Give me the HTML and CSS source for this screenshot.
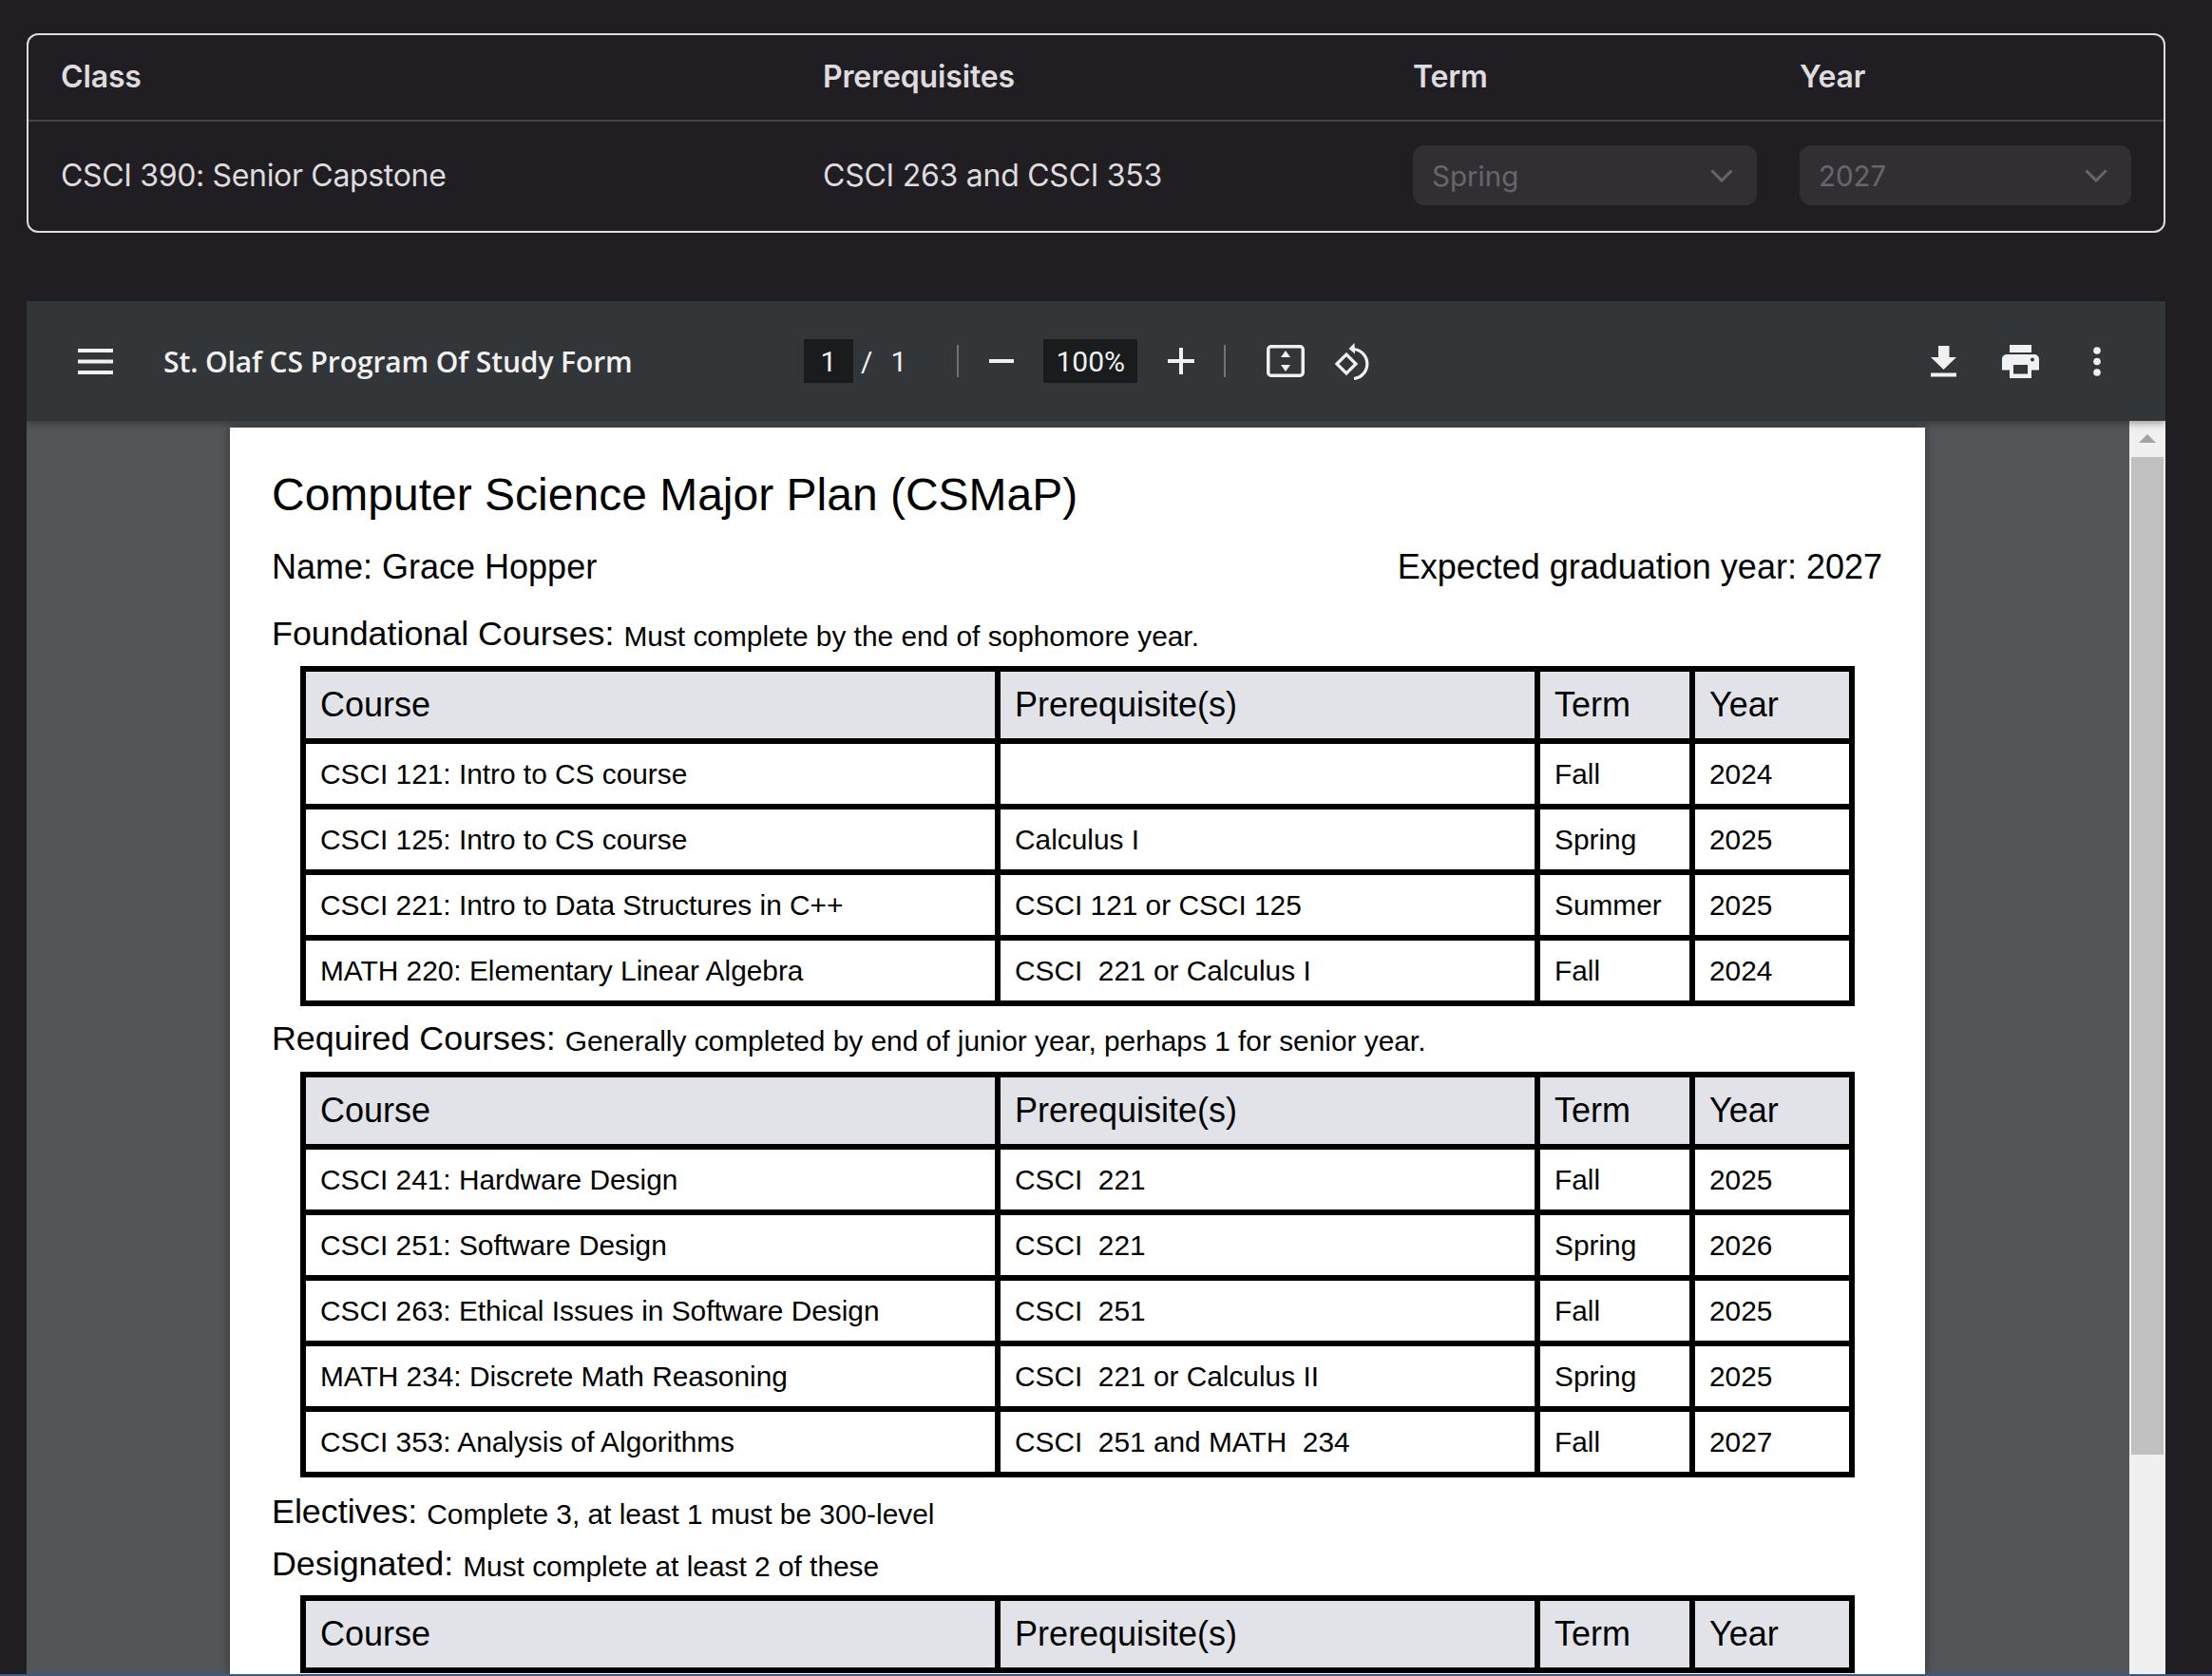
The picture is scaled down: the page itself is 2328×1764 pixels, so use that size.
FILE: index.html
```html
<!DOCTYPE html>
<html lang="en">
<head>
  <meta charset="UTF-8" />
  <title>CSMaP</title>
  <link rel="stylesheet" href="styles.css">
</head>
<body>
  <div class="class-card">
    <div class="class-row class-head">
      <span>Class</span>
      <span>Prerequisites</span>
      <span>Term</span>
      <span>Year</span>
    </div>
    <div class="class-row class-body">
      <span class="class-name">CSCI 390: Senior Capstone</span>
      <span>CSCI 263 and CSCI 353</span>
      <div class="select select-term">
        <span>Spring</span>
        <svg width="24" height="14" viewBox="0 0 24 14"><path d="M1.500 1.500 12 12 22.500 1.500" fill="none" stroke="currentColor" stroke-width="3"/></svg>
      </div>
      <div class="select select-year">
        <span>2027</span>
        <svg width="24" height="14" viewBox="0 0 24 14"><path d="M1.500 1.500 12 12 22.500 1.500" fill="none" stroke="currentColor" stroke-width="3"/></svg>
      </div>
    </div>
  </div>

  <div class="viewer">
    <div class="toolbar">
      <svg class="menu-icon" width="37" height="27" viewBox="0 0 37 27"><path d="M0 0h37v4H0zM0 11.500h37v4H0zM0 23h37v4H0z" fill="#f1f1f1"/></svg>
      <span class="doc-title">St. Olaf CS Program Of Study Form</span>
      <div class="tool-center">
        <span class="num-box page-box">1</span>
        <span class="slash">/</span>
        <span class="page-total">1</span>
        <span class="divider"></span>
        <svg class="zoom-out" width="26" height="26" viewBox="0 0 26 26"><path d="M0 11h26v4H0z" fill="#f1f1f1"/></svg>
        <span class="num-box zoom-box">100%</span>
        <svg class="zoom-in" width="28" height="28" viewBox="0 0 28 28"><path d="M12 0h4v12h12v4H16v12h-4V16H0v-4h12z" fill="#f1f1f1"/></svg>
        <span class="divider"></span>
        <svg class="fit-icon" width="40" height="34" viewBox="0 0 40 34">
          <rect x="1.750" y="1.750" width="36.500" height="30.500" rx="3" fill="none" stroke="#f1f1f1" stroke-width="3.500"/>
          <path d="M20 6l5 7H15zM20 28l-5-7h10z" fill="#f1f1f1"/>
        </svg>
        <svg class="rotate-icon" width="39" height="39" viewBox="0 0 39 39">
          <path d="M3 22 13 12 23 22 13 32z" fill="none" stroke="#f1f1f1" stroke-width="3.200"/>
          <path d="M21 6.500A15.600 15.600 0 0 1 21 37.500" fill="none" stroke="#f1f1f1" stroke-width="3.200"/>
          <path d="M21.500 0 15.500 6 22 11.500z" fill="#f1f1f1"/>
        </svg>
      </div>
      <div class="tool-right">
        <svg class="icon-download" width="27" height="33" viewBox="0 0 27 33"><path d="M8 0h11.500v12H27L13.500 25 0 12h8zM0 28.500h27v4H0z" fill="#f1f1f1"/></svg>
        <svg class="icon-print" width="39" height="35" viewBox="0 0 39 35"><path d="M8 0h23v8H8zM5 10h29c2.800 0 5 2.200 5 5v11.500h-8V35H8v-8.500H0V15c0-2.800 2.200-5 5-5zm7 11v9.500h15V21zm20-7.500a2 2 0 1 0 0 4 2 2 0 0 0 0-4z" fill="#f1f1f1" fill-rule="evenodd"/></svg>
        <svg class="icon-more" width="8" height="31" viewBox="0 0 8 31"><circle cx="4" cy="4" r="3.800" fill="#f1f1f1"/><circle cx="4" cy="15.500" r="3.800" fill="#f1f1f1"/><circle cx="4" cy="27" r="3.800" fill="#f1f1f1"/></svg>
      </div>
    </div>
    <div class="doc-area">
      <div class="page">
        <h1 class="plan-title">Computer Science Major Plan (CSMaP)</h1>
        <div class="name-row">
          <span>Name: Grace Hopper</span>
          <span>Expected graduation year: 2027</span>
        </div>

        <p class="section section-first">Foundational Courses: <small>Must complete by the end of sophomore year.</small></p>
        <table class="plan-table">
          <colgroup><col class="col-course"><col class="col-prereq"><col class="col-term"><col class="col-year"></colgroup>
          <tr><th>Course</th><th>Prerequisite(s)</th><th>Term</th><th>Year</th></tr>
          <tr><td>CSCI 121: Intro to CS course</td><td></td><td>Fall</td><td>2024</td></tr>
          <tr><td>CSCI 125: Intro to CS course</td><td>Calculus I</td><td>Spring</td><td>2025</td></tr>
          <tr><td>CSCI 221: Intro to Data Structures in C++</td><td>CSCI 121 or CSCI 125</td><td>Summer</td><td>2025</td></tr>
          <tr><td>MATH 220: Elementary Linear Algebra</td><td>CSCI&nbsp; 221 or Calculus I</td><td>Fall</td><td>2024</td></tr>
        </table>

        <p class="section">Required Courses: <small>Generally completed by end of junior year, perhaps 1 for senior year.</small></p>
        <table class="plan-table">
          <colgroup><col class="col-course"><col class="col-prereq"><col class="col-term"><col class="col-year"></colgroup>
          <tr><th>Course</th><th>Prerequisite(s)</th><th>Term</th><th>Year</th></tr>
          <tr><td>CSCI 241: Hardware Design</td><td>CSCI&nbsp; 221</td><td>Fall</td><td>2025</td></tr>
          <tr><td>CSCI 251: Software Design</td><td>CSCI&nbsp; 221</td><td>Spring</td><td>2026</td></tr>
          <tr><td>CSCI 263: Ethical Issues in Software Design</td><td>CSCI&nbsp; 251</td><td>Fall</td><td>2025</td></tr>
          <tr><td>MATH 234: Discrete Math Reasoning</td><td>CSCI&nbsp; 221 or Calculus II</td><td>Spring</td><td>2025</td></tr>
          <tr><td>CSCI 353: Analysis of Algorithms</td><td>CSCI&nbsp; 251 and MATH&nbsp; 234</td><td>Fall</td><td>2027</td></tr>
        </table>

        <p class="section section-electives">Electives: <small>Complete 3, at least 1 must be 300-level</small></p>
        <p class="section section-designated">Designated: <small>Must complete at least 2 of these</small></p>
        <table class="plan-table">
          <colgroup><col class="col-course"><col class="col-prereq"><col class="col-term"><col class="col-year"></colgroup>
          <tr><th>Course</th><th>Prerequisite(s)</th><th>Term</th><th>Year</th></tr>
        </table>
      </div>
      <div class="scrollbar">
        <div class="scroll-up"></div>
        <div class="scroll-thumb"></div>
      </div>
    </div>
  </div>
  <div class="bottom-line"></div>
</body>
</html>
```
FILE: styles.css
```css
* {
  margin: 0;
  padding: 0;
  box-sizing: border-box;
}
html, body {
  height: 1764px;
  overflow: hidden;
}
body {
  background-color: #211e23;
  font-family: Inter, sans-serif;
  padding: 35px 49px 0 28px;
  position: relative;
}

/* class card */
.class-card {
  height: 210px;
  border: 2px solid #dcdcde;
  border-radius: 12px;
  color: #dedcdf;
}
.class-row {
  display: grid;
  grid-template-columns: 802px 621px 407px 1fr;
  padding: 0 34px;
  align-items: center;
  font-size: 32px;
}
.class-head {
  height: 91px;
  padding-bottom: 2px;
  font-weight: 600;
  letter-spacing: -0.15px;
  border-bottom: 2px solid #46434a;
}
.class-body {
  height: 115px;
  padding-bottom: 2px;
  letter-spacing: -0.25px;
}
.class-name { letter-spacing: -0.33px; }
.select {
  height: 63px;
  border-radius: 12px;
  background: #322f34;
  color: #69666b;
  font-size: 29.500px;
  letter-spacing: 0;
  display: flex;
  align-items: center;
  justify-content: space-between;
  padding: 0 25px 0 20px;
}
.select-term { width: 362px; }
.select-year { width: 349px; }

/* pdf viewer */
.viewer {
  margin-top: 72px;
  width: 2251px;
  height: 1445px;
  background: #525659;
  overflow: hidden;
}
.toolbar {
  height: 126px;
  background: #323639;
  color: #f1f1f1;
  display: flex;
  align-items: center;
  padding: 0 68px 0 54px;
  position: relative;
  z-index: 3;
  box-shadow: 0 2px 8px rgba(0, 0, 0, 0.4);
}
.doc-title {
  margin-left: 53px;
  font-family: "Open Sans", sans-serif;
  font-weight: 600;
  font-size: 30px;
  letter-spacing: -0.1px;
  width: 674px;
}
.tool-center {
  display: flex;
  align-items: center;
  font-family: Roboto, sans-serif;
  font-size: 30px;
}
.num-box {
  background: #191b1c;
  height: 46px;
  display: flex;
  align-items: center;
  justify-content: center;
}
.page-box { width: 52px; }
.zoom-box { width: 99px; }
.slash { margin-left: 8px; }
.page-total { margin-left: 19px; }
.divider {
  width: 2px;
  height: 34px;
  background: #707375;
  margin-left: 53px;
}
.zoom-out { margin: 0 31px 0 32px; }
.zoom-in { margin: 0 31px 0 32px; }
.zoom-in + .divider { margin-left: 0; }
.fit-icon { margin-left: 43px; }
.rotate-icon { margin-left: 31px; }
.tool-right {
  margin-left: auto;
  display: flex;
  align-items: center;
}
.icon-print { margin-left: 48px; }
.icon-more { margin-left: 57px; }
.doc-area {
  height: 1319px;
  display: flex;
  position: relative;
  padding-left: 214px;
}
.page {
  width: 1784px;
  height: 1312px;
  margin-top: 7px;
  background: #fff;
  color: #000;
  font-family: "Liberation Sans", Arial, sans-serif;
  padding: 41px 45px 0 44px;
  box-shadow: 0 0 10px rgba(0, 0, 0, 0.4);
  overflow: hidden;
}
.plan-title {
  font-weight: 400;
  font-size: 48px;
  line-height: 60px;
}
.name-row {
  margin-top: 24px;
  display: flex;
  justify-content: space-between;
  font-size: 36px;
  line-height: 44px;
}
.section {
  font-size: 35.850px;
  line-height: 44px;
  margin: 12px 0 13px;
}
.section small {
  font-size: 29.850px;
  line-height: 1;
  vertical-align: -0.500px;
}
.section-first { margin-top: 26px; margin-bottom: 12px; }
.section-electives { margin-top: 14px; margin-bottom: 0; }
.section-designated { margin-top: 11px; margin-bottom: 11px; }
.plan-table {
  margin-left: 30px;
  width: 1636px;
  table-layout: fixed;
  border-collapse: separate;
  border-spacing: 0;
  border-top: 6px solid #000;
  border-left: 6px solid #000;
}
.col-course { width: 731px; }
.col-prereq { width: 568px; }
.col-term { width: 163px; }
.col-year { width: 168px; }
.plan-table th, .plan-table td {
  border-right: 6px solid #000;
  border-bottom: 6px solid #000;
  padding: 0 0 0 15px;
  text-align: left;
  font-weight: 400;
  white-space: nowrap;
}
.plan-table th {
  height: 76px;
  background: #e2e3e9;
  font-size: 36px;
}
.plan-table td {
  height: 69px;
  font-size: 29.840px;
}
.scrollbar {
  position: absolute;
  top: 0;
  right: 0;
  bottom: 0;
  width: 38px;
  background: #f0f0f0;
  z-index: 2;
}
.scroll-up {
  height: 38px;
  position: relative;
}
.scroll-up::after {
  content: "";
  position: absolute;
  left: 10px;
  top: 14px;
  border: 9px solid transparent;
  border-top: 0;
  border-bottom-color: #a3a3a3;
}
.scroll-thumb {
  margin: 0 2px;
  height: 1050px;
  background: #c0c0c0;
}
.bottom-line {
  position: absolute;
  left: 0;
  right: 0;
  bottom: 0;
  height: 2px;
  background: #345a85;
}
```
